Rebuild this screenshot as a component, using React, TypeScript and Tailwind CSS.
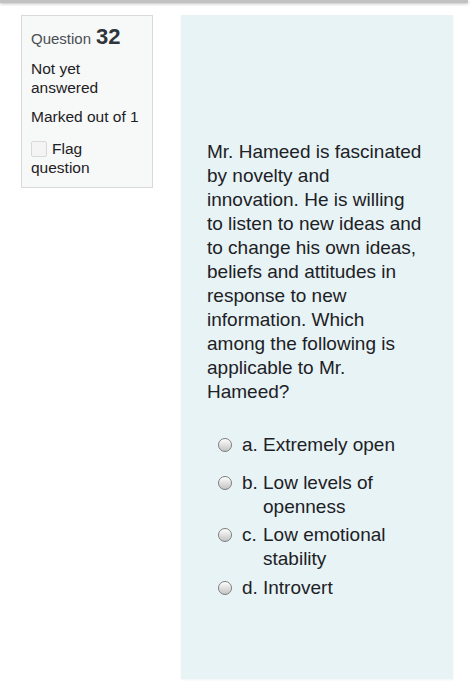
const options = [
  { letter: "a.", text: "Extremely open", gap: "mb-[14px]" },
  { letter: "b.", text: "Low levels of openness", gap: "mb-[4px]" },
  { letter: "c.", text: "Low emotional stability", gap: "mb-[5px]" },
  { letter: "d.", text: "Introvert", gap: "" },
]

function Radio() {
  return (
    <span className="mt-[5px] h-[14px] w-[14px] shrink-0 rounded-full border border-[#7c7c7c] bg-gradient-to-b from-[#fdfdfd] to-[#c4c4c4] shadow-[inset_0_1px_1px_rgba(255,255,255,0.9)]" />
  )
}

export default function App() {
  return (
    <div className="min-h-[700px] w-[474px] bg-white font-['Liberation_Sans',Arial,sans-serif] text-[#1d2125]">
      <div className="mr-[6px] h-[3px] bg-[#c2c2c2] shadow-[0_1px_3px_rgba(0,0,0,0.25)]" />

      <div className="mt-[12px] flex items-start">
        <div className="ml-[21px] w-[132px] border border-[#d9d9d9] bg-[#f7f8f8] px-[9px] pb-[10px] pt-[7px]">
          <div className="flex items-baseline leading-[28px]">
            <span className="text-[15px] text-[#4a4f54]">Question</span>
            <span className="ml-[5px] text-[22px] font-bold text-[#30353a]">32</span>
          </div>
          <div className="mt-[6px] text-[15.5px] leading-[19px]">Not yet answered</div>
          <div className="mt-[10px] text-[15.5px] leading-[19px]">Marked out of 1</div>
          <div className="mt-[12px] text-[15.5px] leading-[19px]">
            <span className="mr-[5px] inline-block h-[16px] w-[16px] translate-y-[3px] rounded-[2px] border border-[#d8d8d8] bg-[#f4f4f4]" />
            Flag
            <br />
            question
          </div>
        </div>

        <div className="ml-[28px] h-[664px] w-[272px] bg-[#e7f3f5] pl-[26px] pr-[29px] pt-[125px] shadow-[0_1px_2px_rgba(0,0,0,0.05)]">
          <p className="text-[19px] leading-[24px]">
            Mr. Hameed is fascinated by novelty and innovation. He is willing to listen to new ideas and to change his own
            ideas, beliefs and attitudes in response to new information. Which among the following is applicable to Mr.
            Hameed?
          </p>

          <div className="mt-[29px] ml-[11px]">
            {options.map(option => (
              <label key={option.letter} className={`flex items-start gap-[10px] text-[19px] leading-[24px] ${option.gap}`}>
                <Radio />
                <span className="flex">
                  <span className="w-[21px] shrink-0">{option.letter}</span>
                  <span>{option.text}</span>
                </span>
              </label>
            ))}
          </div>
        </div>
      </div>
    </div>
  )
}
